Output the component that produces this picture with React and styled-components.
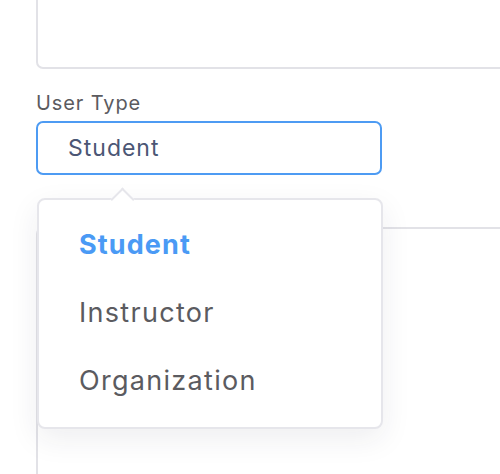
import React, { useState } from 'react'
import styled, { createGlobalStyle } from 'styled-components';

const GlobalStyle = createGlobalStyle`
  body {
    margin: 0;
    background: #ffffff;
    font-family: 'Inter', 'Noto Sans', sans-serif;
  }
`;

const options = ['Student', 'Instructor', 'Organization'];

function App() {
  const [userType, setUserType] = useState('Student');

  return (
    <Page>
      <GlobalStyle />
      <TextBox />

      <Label>User Type</Label>
      <SelectWrap>
        <Select>{userType}</Select>

        <Menu>
          {options.map(option => (
            <Option
              key={option}
              $active={option === userType}
              onClick={() => setUserType(option)}
            >
              {option}
            </Option>
          ))}
        </Menu>
      </SelectWrap>

      <Label $hidden>Organization</Label>
      <TextBox $open />
    </Page>
  )
}

export default App

const Page = styled.div`
  position: relative;
  height: 474px;
  padding-left: 36px;
  overflow: hidden;
  box-sizing: border-box;
`;

const TextBox = styled.div`
  height: ${props => props.$open ? '260px' : '69px'};
  margin-right: -40px;
  border: 2px solid #e2e2e7;
  border-top: ${props => props.$open ? '2px solid #e2e2e7' : 'none'};
  border-radius: ${props => props.$open ? '7px 0 0 0' : '0 0 0 7px'};
  box-sizing: border-box;
`;

const Label = styled.div`
  margin-top: ${props => props.$hidden ? '24px' : '22px'};
  margin-bottom: ${props => props.$hidden ? '4px' : '6px'};
  font-size: 20px;
  line-height: 24px;
  letter-spacing: 0.9px;
  color: #5b5b5f;
  visibility: ${props => props.$hidden ? 'hidden' : 'visible'};
`;

const SelectWrap = styled.div`
  position: relative;
`;

const Select = styled.div`
  width: 346px;
  height: 54px;
  display: flex;
  align-items: center;
  padding-left: 30px;
  border: 2px solid #4d9bf3;
  border-radius: 7px;
  box-sizing: border-box;
  font-size: 23px;
  letter-spacing: 1px;
  color: #4b5675;
`;

const Menu = styled.div`
  position: absolute;
  top: 77px;
  left: 1px;
  z-index: 2;
  width: 346px;
  height: 231px;
  padding: 23px 0 0 40px;
  display: flex;
  flex-direction: column;
  gap: 24px;
  background: #ffffff;
  border: 2px solid #e6e6eb;
  border-radius: 8px;
  box-shadow: 0 10px 30px rgba(40, 40, 60, 0.08);
  box-sizing: border-box;

  &::before {
    content: '';
    position: absolute;
    top: -9px;
    left: 75px;
    width: 15px;
    height: 15px;
    background: #ffffff;
    border-top: 2px solid #e6e6eb;
    border-left: 2px solid #e6e6eb;
    transform: rotate(45deg);
  }
`;

const Option = styled.div`
  font-size: 27px;
  line-height: 44px;
  letter-spacing: ${props => props.$active ? '1.1px' : '1.3px'};
  font-weight: ${props => props.$active ? 700 : 400};
  color: ${props => props.$active ? '#4a9af5' : '#5b5b60'};
  cursor: pointer;
`;
